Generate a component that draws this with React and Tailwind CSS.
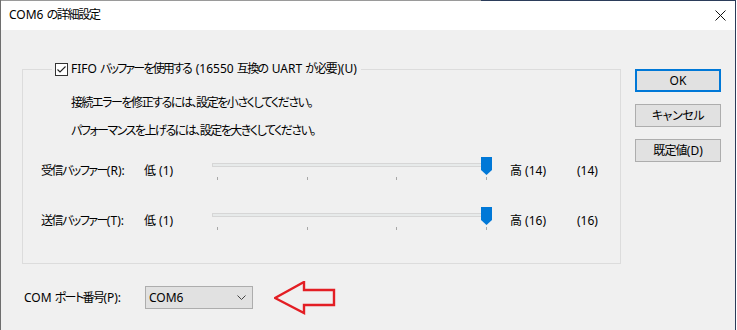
import React from "react";

const font = "font-['Noto_Sans','Noto_Sans_CJK_JP',sans-serif] [font-feature-settings:'palt']";

function J({ children, t = "tracking-[-1.5px]" }) {
  return <span className={t}>{children}</span>;
}

function Slider() {
  const ticks = [6, 96, 185, 275];
  return (
    <svg width="299" height="24" viewBox="0 0 299 24" className="shrink-0">
      <rect x="1.5" y="6.5" width="279" height="3" fill="#e7eaea" stroke="#d6d6d6" />
      {ticks.map((t) => (
        <rect key={t} x={t} y="20" width="1" height="3" fill="#a8a8a8" />
      ))}
      <path d="M270 0 H281 V13 L275.5 18 L270 13 Z" fill="#0078d7" />
    </svg>
  );
}

function SliderRow({ label, letter, low, high, value, className }) {
  return (
    <div className={"flex items-start h-[24px] " + className}>
      <span className="w-[103px] ml-[18px] mt-[6px] leading-[16px] whitespace-nowrap">
        <J>{label}</J>({letter}):
      </span>
      <span className="w-[67px] mt-[6px] leading-[16px] whitespace-nowrap">{low}</span>
      <Slider />
      <span className="w-[67px] mt-[6px] leading-[16px] whitespace-nowrap">{high}</span>
      <span className="mt-[6px] leading-[16px] whitespace-nowrap">{value}</span>
    </div>
  );
}

function Button({ children, primary }) {
  return (
    <div
      className={
        "w-[86px] h-[23px] flex items-center justify-center bg-[#e1e1e1] leading-[16px] " +
        (primary ? "border-2 border-[#0078d7]" : "border border-[#adadad]")
      }
    >
      {children}
    </div>
  );
}

export default function App() {
  return (
    <div className={"w-[736px] h-[330px] overflow-hidden bg-[#f0f0f0] border-l border-l-[#6e6e6e] border-r border-r-[#2b3c5a] text-[12px] text-black " + font}>
      <div className="flex h-px">
        <div className="w-[480px] bg-[#9a9a9a]" />
        <div className="flex-1 bg-[#2b3c5a]" />
      </div>
      <div className="h-[29px] bg-white flex items-center justify-between pl-[8px] pr-[9px]">
        <span className="leading-[16px] -mt-[1px] whitespace-nowrap">
          COM6 <J t="tracking-[-1.3px]">の詳細設定</J>
        </span>
        <svg width="11" height="11" viewBox="0 0 11 11">
          <path d="M0.5 0.5 L10.5 10.5 M10.5 0.5 L0.5 10.5" stroke="#111" strokeWidth="1" />
        </svg>
      </div>
      <div className="flex">
        <div className="w-[620px] pl-[21px] pt-[32px] shrink-0">
          <fieldset className="border border-[#dcdcdc] h-[202px] w-[599px]">
            <legend className="ml-[29px] pl-[3px] pr-[4px] flex items-center h-[14px]">
              <svg width="13" height="13" viewBox="0 0 13 13" className="shrink-0">
                <rect x="0.5" y="0.5" width="12" height="12" fill="white" stroke="#333" />
                <path d="M2.5 6.5 L5 9 L10.5 3.5" fill="none" stroke="#222" strokeWidth="1.1" />
              </svg>
              <span className="ml-[3px] leading-[14px] whitespace-nowrap">
                FIFO <J t="tracking-[-1.8px] mr-[1.5px]">バッファーを使用する</J> (16550 <J t="tracking-[-1.6px] mr-[1px]">互換の</J> UART <J t="tracking-[-1.6px] mr-[1px]">が必要</J>)(U)
              </span>
            </legend>
            <div className="pt-[19px]">
              <div className="pl-[48px] leading-[16px] whitespace-nowrap tracking-[-1.45px]">接続エラーを修正するには、設定を小さくしてください。</div>
              <div className="pl-[48px] mt-[12px] leading-[16px] whitespace-nowrap tracking-[-1.5px]">パフォーマンスを上げるには、設定を大きくしてください。</div>
              <SliderRow className="mt-[18px]" label="受信バッファー" letter="R" low="低 (1)" high="高 (14)" value="(14)" />
              <SliderRow className="mt-[26px]" label="送信バッファー" letter="T" low="低 (1)" high="高 (16)" value="(16)" />
            </div>
          </fieldset>
          <div className="flex items-center h-[23px] mt-[22px]">
            <span className="w-[121px] ml-[2px] leading-[16px] whitespace-nowrap">
              COM <J t="tracking-[-1.6px]">ポート番号</J>(P):
            </span>
            <div className="w-[108px] h-[23px] bg-[#e1e1e1] border border-[#adadad] flex items-center justify-between pl-[3px] pr-[6px]">
              <span className="leading-[16px]">COM6</span>
              <svg width="9" height="5" viewBox="0 0 9 5">
                <path d="M0.5 0.5 L4.5 4.5 L8.5 0.5" fill="none" stroke="#444" strokeWidth="1" />
              </svg>
            </div>
            <svg width="62" height="34" viewBox="0 0 62 34" className="ml-[21px]">
              <path d="M1 17 L30 1 V9 H60 V24 H30 V32 Z" fill="none" stroke="#e31e24" strokeWidth="2.4" strokeLinejoin="miter" />
            </svg>
          </div>
        </div>
        <div className="ml-[14px] pt-[39px] flex flex-col gap-[12px]">
          <Button primary>OK</Button>
          <Button><J t="tracking-[-0.4px]">キャンセル</J></Button>
          <Button><J t="tracking-[-0.8px]">既定値</J>(D)</Button>
        </div>
      </div>
    </div>
  );
}
